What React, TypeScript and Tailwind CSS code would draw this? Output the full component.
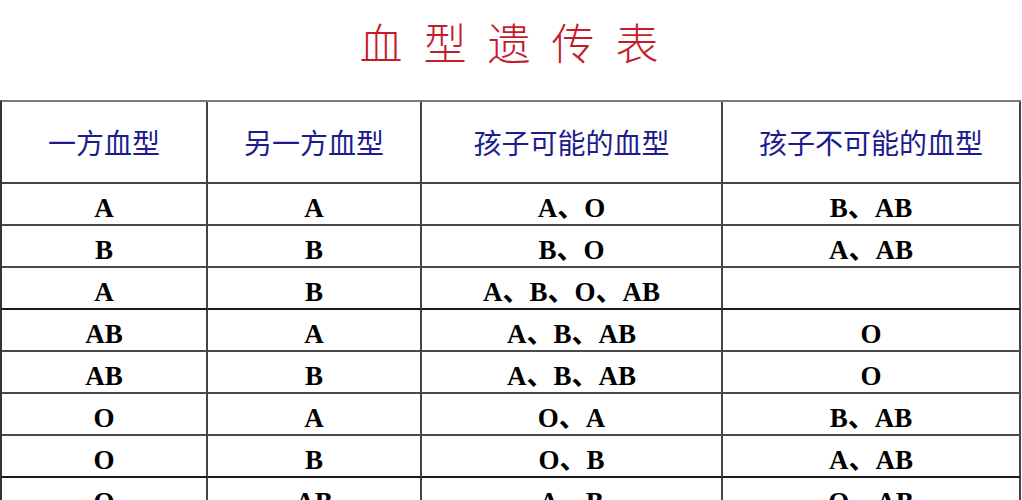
const columns = [
  { label: "一方血型", width: "w-[206px]" },
  { label: "另一方血型", width: "w-[214px]" },
  { label: "孩子可能的血型", width: "w-[301px]" },
  { label: "孩子不可能的血型", width: "w-[298px]" },
];

const rows: { cells: string[]; dark?: boolean }[] = [
  { cells: ["A", "A", "A、O", "B、AB"] },
  { cells: ["B", "B", "B、O", "A、AB"] },
  { cells: ["A", "B", "A、B、O、AB", ""], dark: true },
  { cells: ["AB", "A", "A、B、AB", "O"] },
  { cells: ["AB", "B", "A、B、AB", "O"] },
  { cells: ["O", "A", "O、A", "B、AB"] },
  { cells: ["O", "B", "O、B", "A、AB"], dark: true },
  { cells: ["O", "AB", "A、B", "O、AB"] },
];

const titleChars = ["血", "型", "遗", "传", "表"];

export default function App() {
  return (
    <div className="w-[1022px] h-[500px] overflow-hidden bg-white">
      <div className="h-[100px] flex justify-center pt-[20px]">
        <div className="flex gap-[21px] pr-[4px] text-[43px] leading-none text-[#c41c2a] font-['Noto_Sans_CJK_SC',sans-serif] font-light">
          {titleChars.map((c) => (
            <span key={c}>{c}</span>
          ))}
        </div>
      </div>

      <div className="w-[1021px] border-t-2 border-l-2 border-t-[#7a7a7a] border-l-[#333]">
        <div className="flex">
          {columns.map((col) => (
            <div
              key={col.label}
              className={`${col.width} h-[82px] flex items-center justify-center border-r-2 border-b-2 border-[#444] text-[28px] text-[#1c1c8c] font-['Noto_Sans_CJK_SC',sans-serif]`}
            >
              {col.label}
            </div>
          ))}
        </div>

        {rows.map((row, i) => (
          <div key={i} className="flex">
            {row.cells.map((cell, j) => (
              <div
                key={j}
                className={`${columns[j].width} h-[42px] flex items-center justify-center pt-2 border-r-2 border-b-2 ${
                  row.dark ? "border-b-[#1a1a1a]" : "border-b-[#4a4a4a]"
                } border-r-[#444] text-[27px] leading-none font-bold text-black font-['Liberation_Serif','Noto_Sans_CJK_SC',serif]`}
              >
                {cell}
              </div>
            ))}
          </div>
        ))}
      </div>
    </div>
  );
}
